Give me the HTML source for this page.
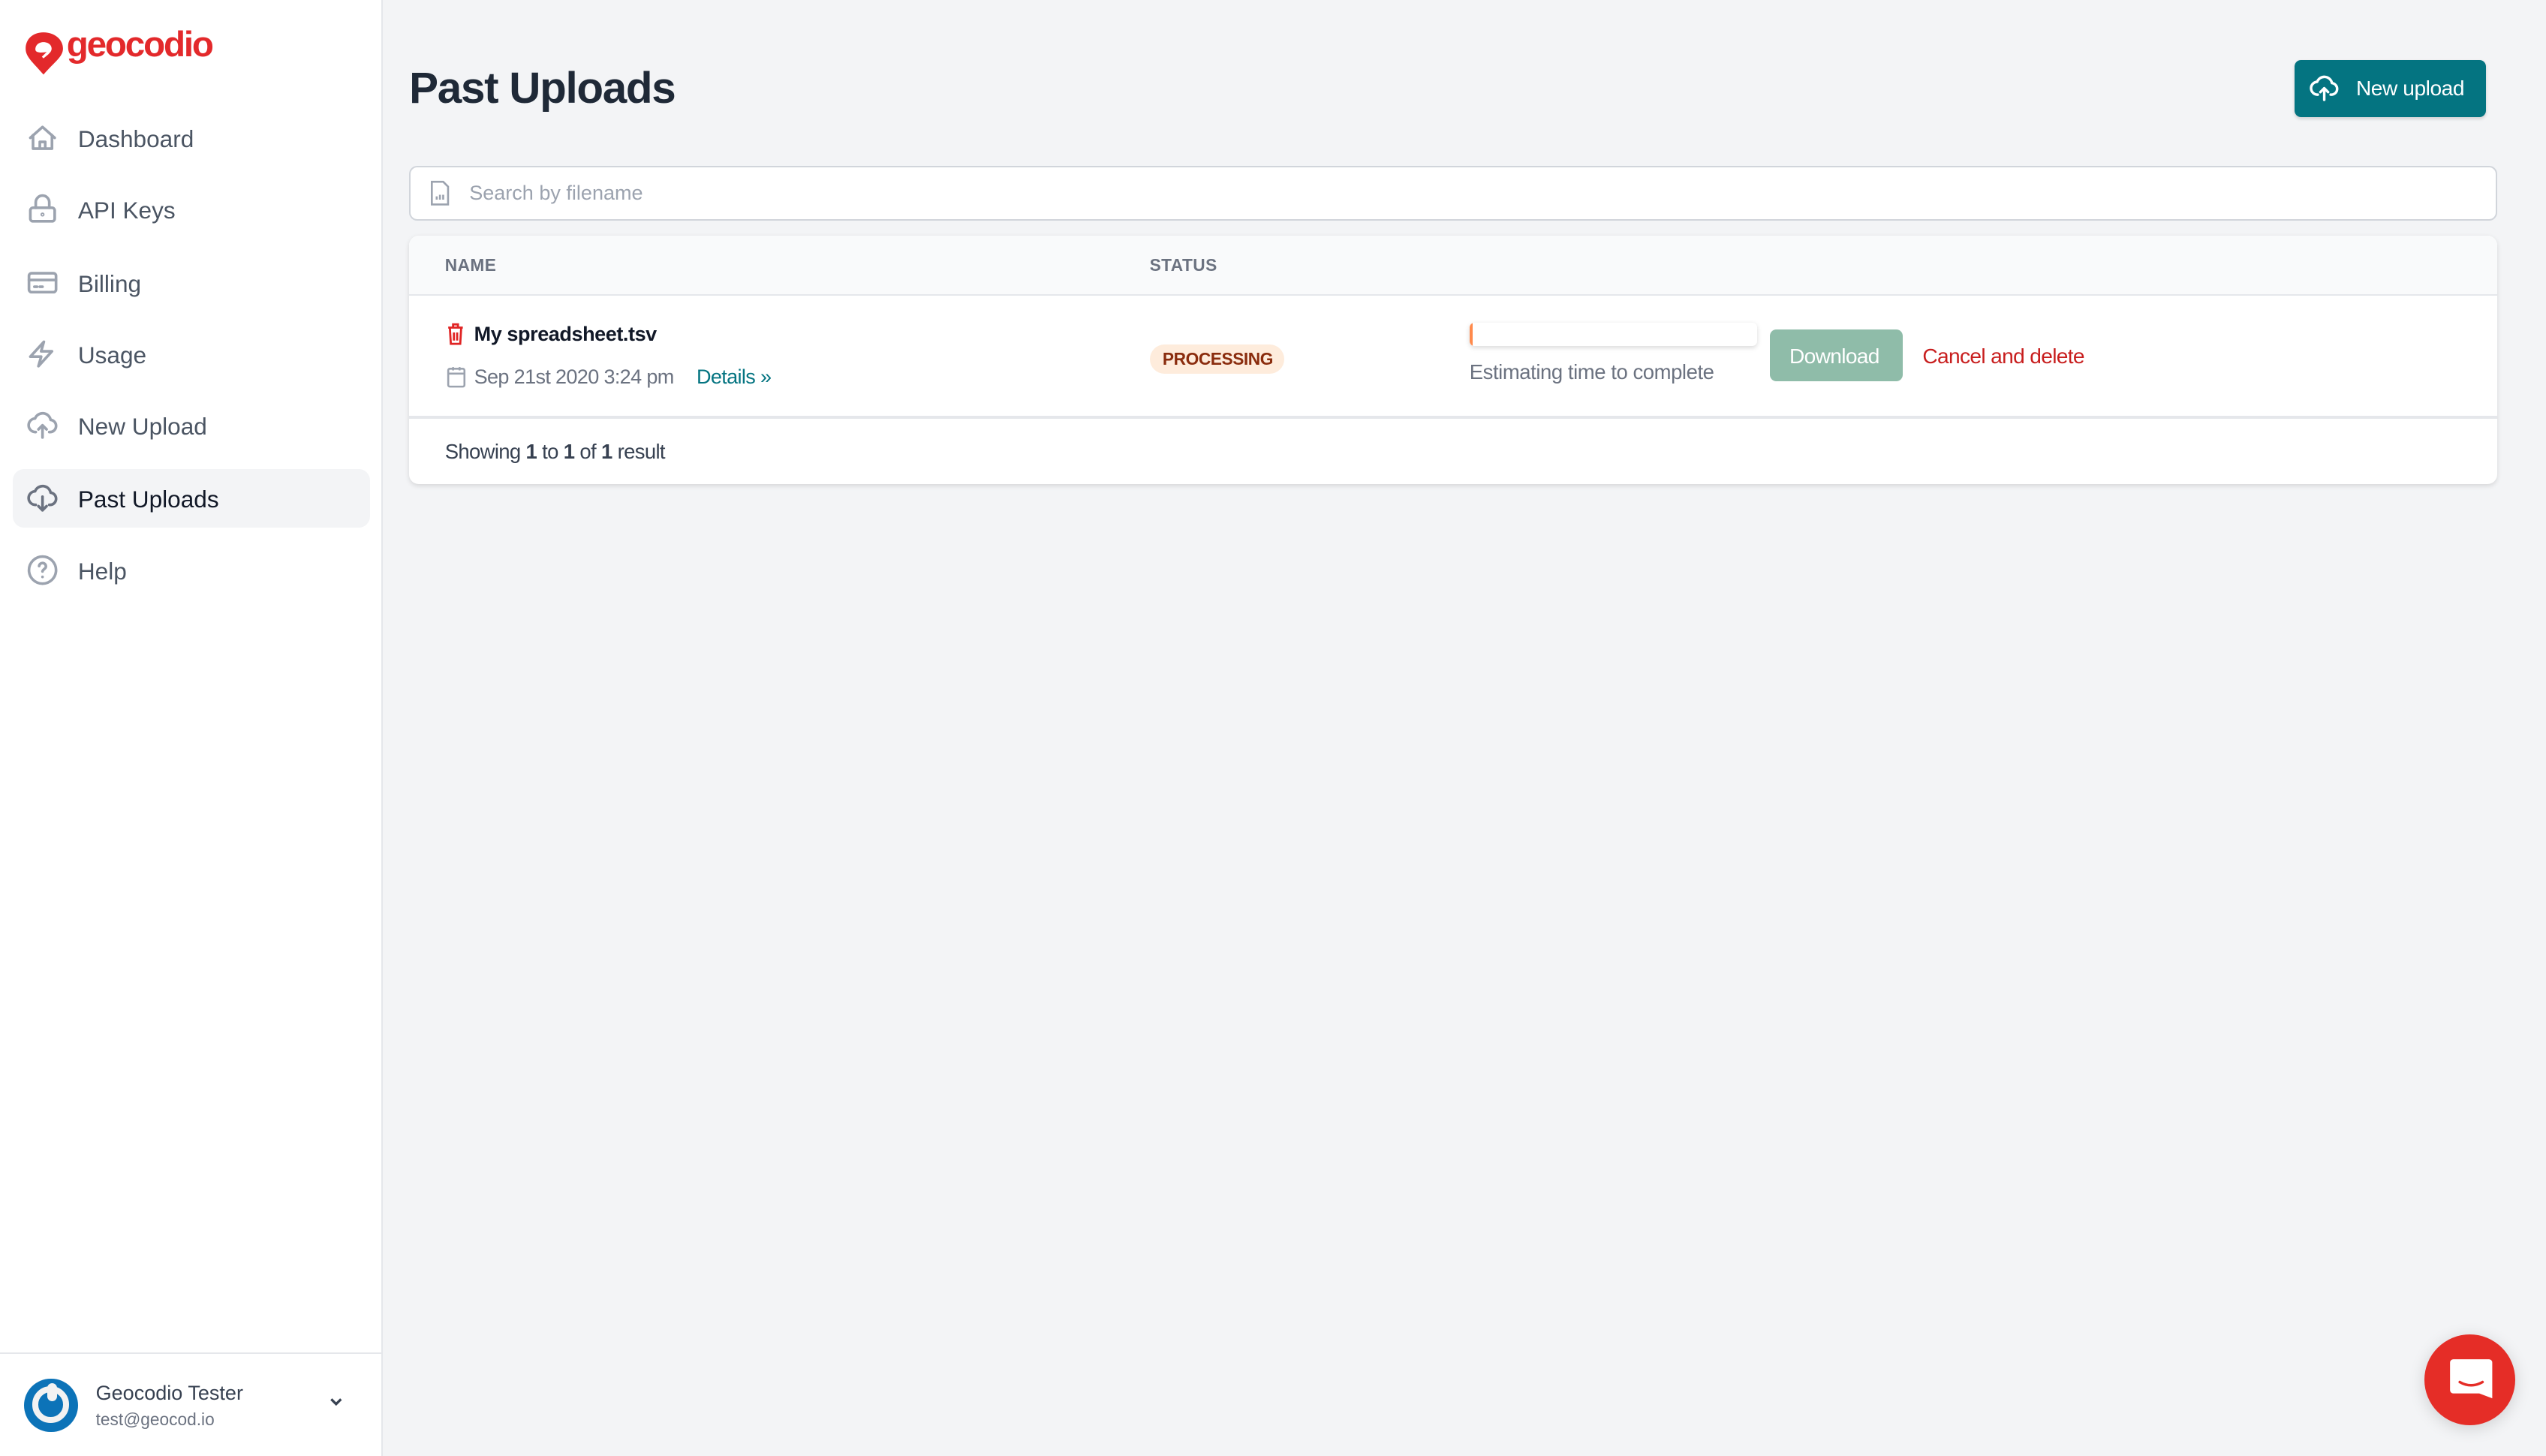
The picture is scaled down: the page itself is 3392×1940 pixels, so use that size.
<!DOCTYPE html>
<html><head><meta charset="utf-8">
<style>
html,body{margin:0;padding:0}
body{width:3392px;height:1940px;overflow:hidden;background:#f4f5f7;font-family:"Liberation Sans",sans-serif}
#r{position:absolute;left:0;top:0;width:1568px;height:897px;zoom:2.1633;background:#f3f4f6}
.a{position:absolute}
.side{left:0;top:0;width:235px;height:897px;background:#fff;border-right:1px solid #e5e7eb}
.nav{left:16px;width:220px;height:24px;font-size:14.6px;color:#4b5563;line-height:24px}
.nav svg{position:absolute;left:0;top:2px}
.nav span{position:absolute;left:32px;top:1px}
.th{font-size:10.5px;font-weight:bold;color:#6b7280;letter-spacing:.2px}
</style></head><body><div id="r">
<div class="a side"></div>
<svg class="a" style="left:15px;top:19px" width="25" height="29" viewBox="0 0 25 29"><path d="M12 1C5 1 1 5.5 1 11c0 5 4 8 11 16 7-8 12-11 12-16C24 5.5 19 1 12 1z" fill="#e3292b"/><path d="M7 11.5C7 8.5 9.5 7 12 7s5 1.5 5 4c0 1.5-1 2.5-2 3.5L12 17l-1-1 3-3c-2 .5-7 1-7-1.5z" fill="#fff"/></svg>
<div class="a" style="left:41px;top:15px;font-size:22px;font-weight:bold;color:#e3292b;letter-spacing:-1px">geocodio</div>

<div class="a nav" style="top:73px"><svg width="20" height="20" viewBox="0 0 24 24" fill="none" stroke="#9ca3af" stroke-width="2" stroke-linecap="round" stroke-linejoin="round"><path d="M3 12l9-8 9 8M5 10v10h14V10M10 20v-5h4v5"/></svg><span>Dashboard</span></div>
<div class="a nav" style="top:117px"><svg width="20" height="20" viewBox="0 0 24 24" fill="none" stroke="#9ca3af" stroke-width="2" stroke-linecap="round" stroke-linejoin="round"><rect x="3" y="11" width="18" height="10" rx="2"/><path d="M7 11V7a5 5 0 0110 0v4"/><circle cx="12" cy="16" r=".5"/></svg><span>API Keys</span></div>
<div class="a nav" style="top:162px"><svg width="20" height="20" viewBox="0 0 24 24" fill="none" stroke="#9ca3af" stroke-width="2" stroke-linecap="round"><rect x="2" y="5" width="20" height="14" rx="2"/><path d="M2 10h20M6 15h2M10 15h2"/></svg><span>Billing</span></div>
<div class="a nav" style="top:206px"><svg width="20" height="20" viewBox="0 0 24 24" fill="none" stroke="#9ca3af" stroke-width="2" stroke-linejoin="round"><path d="M13 3L3 14h8l-2 7 10-11h-8z"/></svg><span>Usage</span></div>
<div class="a nav" style="top:250px"><svg width="20" height="20" viewBox="0 0 24 24" fill="none" stroke="#9ca3af" stroke-width="2" stroke-linecap="round" stroke-linejoin="round"><path d="M7 17a5 5 0 01-.5-10A6 6 0 0118 8a4.5 4.5 0 01-1 9M12 12v9M9 15l3-3 3 3"/></svg><span>New Upload</span></div>
<div class="a" style="left:8px;top:289px;width:220px;height:36px;background:#f3f4f6;border-radius:7px"></div>
<div class="a nav" style="top:295px;color:#111827"><svg width="20" height="20" viewBox="0 0 24 24" fill="none" stroke="#6b7280" stroke-width="2" stroke-linecap="round" stroke-linejoin="round"><path d="M7 17a5 5 0 01-.5-10A6 6 0 0118 8a4.5 4.5 0 01-1 9M12 11v10M9 18l3 3 3-3"/></svg><span>Past Uploads</span></div>
<div class="a nav" style="top:339px"><svg width="20" height="20" viewBox="0 0 24 24" fill="none" stroke="#9ca3af" stroke-width="2" stroke-linecap="round"><circle cx="12" cy="12" r="10"/><path d="M9.5 9a2.5 2.5 0 015 .5c0 1.5-2.5 2-2.5 3.5M12 17h.01"/></svg><span>Help</span></div>

<div class="a" style="left:0;top:833px;width:235px;height:1px;background:#e5e7eb"></div>
<div class="a" style="left:15px;top:849px;width:33px;height:33px;border-radius:50%;background:#0c73b8"></div>
<div class="a" style="left:20px;top:854px;width:15px;height:15px;border-radius:50%;border:4px solid #f2f2f2"></div>
<div class="a" style="left:29px;top:852px;width:6px;height:11px;border-radius:3px;background:#f2f2f2"></div>
<div class="a" style="left:59px;top:851px;font-size:12.5px;color:#374151">Geocodio Tester</div>
<div class="a" style="left:59px;top:868px;font-size:10.5px;color:#6b7280">test@geocod.io</div>
<svg class="a" style="left:202px;top:860px" width="10" height="8" viewBox="0 0 10 8"><path d="M2 2l3 3 3-3" fill="none" stroke="#374151" stroke-width="1.5"/></svg>

<div class="a" style="left:252px;top:39px;font-size:27px;font-weight:bold;color:#1f2937;letter-spacing:-.6px">Past Uploads</div>
<div class="a" style="left:1413px;top:37px;width:118px;height:35px;background:#047481;border-radius:4px;box-shadow:0 1px 2px rgba(0,0,0,.15)"></div>
<svg class="a" style="left:1422px;top:45px" width="19" height="19" viewBox="0 0 24 24" fill="none" stroke="#fff" stroke-width="2" stroke-linecap="round" stroke-linejoin="round"><path d="M7 17a5 5 0 01-.5-10A6 6 0 0118 8a4.5 4.5 0 01-1 9M12 12v9M9 15l3-3 3 3"/></svg>
<div class="a" style="left:1451px;top:47px;font-size:13px;color:#fff;letter-spacing:-.2px">New upload</div>

<div class="a" style="left:252px;top:102px;width:1284px;height:32px;background:#fff;border:1px solid #d1d5db;border-radius:5px"></div>
<svg class="a" style="left:264px;top:111px" width="14" height="16" viewBox="0 0 14 16" fill="none" stroke="#9ca3af" stroke-width="1.2"><path d="M2 1h7l3 3v11H2z"/><path d="M5 12v-2M7 12V9M9 12v-3"/></svg>
<div class="a" style="left:289px;top:112px;font-size:12.5px;color:#9ca3af">Search by filename</div>

<div class="a" style="left:252px;top:145px;width:1286px;height:153px;background:#fff;border-radius:6px;box-shadow:0 1px 3px rgba(0,0,0,.12)"></div>
<div class="a" style="left:252px;top:145px;width:1286px;height:36px;background:#f9fafb;border-radius:6px 6px 0 0;border-bottom:1px solid #e5e7eb"></div>
<div class="a th" style="left:274px;top:157px">NAME</div>
<div class="a th" style="left:708px;top:157px">STATUS</div>
<svg class="a" style="left:275px;top:199px" width="11" height="14" viewBox="0 0 11 14" fill="none" stroke="#e02424" stroke-width="1.3"><path d="M1 3h9M4 3V1h3v2M2 3l.6 10h5.8L9 3M4.5 6v5M6.5 6v5"/></svg>
<div class="a" style="left:292px;top:199px;font-size:12.5px;font-weight:bold;color:#111827;letter-spacing:-.2px">My spreadsheet.tsv</div>
<svg class="a" style="left:275px;top:225px" width="12" height="14" viewBox="0 0 12 14" fill="none" stroke="#9ca3af" stroke-width="1.2"><rect x="1" y="2" width="10" height="11" rx="1"/><path d="M1 5h10M4 1v2M8 1v2"/></svg>
<div class="a" style="left:292px;top:225px;font-size:12.5px;color:#6b7280;letter-spacing:-.3px">Sep 21st 2020 3:24 pm</div>
<div class="a" style="left:429px;top:225px;font-size:12.5px;color:#047481;letter-spacing:-.3px">Details »</div>
<div class="a" style="left:708px;top:212px;width:83px;height:18px;background:#feecdc;border-radius:9px"></div>
<div class="a" style="left:716px;top:215px;font-size:10.5px;font-weight:bold;color:#8a2c0d;letter-spacing:-.2px">PROCESSING</div>
<div class="a" style="left:905px;top:199px;width:177px;height:14px;background:#fff;border-radius:3px;box-shadow:0 1px 3px rgba(0,0,0,.15);overflow:hidden"><div style="width:2px;height:14px;background:#ff8a4c"></div></div>
<div class="a" style="left:905px;top:222px;font-size:12.7px;color:#6b7280;letter-spacing:-.2px">Estimating time to complete</div>
<div class="a" style="left:1090px;top:203px;width:82px;height:32px;background:#8fbca9;border-radius:4px"></div>
<div class="a" style="left:1102px;top:212px;font-size:13px;color:#fff;letter-spacing:-.3px">Download</div>
<div class="a" style="left:1184px;top:212px;font-size:13px;color:#c81e1e;letter-spacing:-.3px">Cancel and delete</div>
<div class="a" style="left:252px;top:256px;width:1286px;height:2px;background:#e5e7eb"></div>
<div class="a" style="left:274px;top:271px;font-size:12.7px;color:#374151;letter-spacing:-.3px">Showing <b>1</b> to <b>1</b> of <b>1</b> result</div>

<div class="a" style="left:1493px;top:822px;width:56px;height:56px;border-radius:50%;background:#e52d27;box-shadow:0 2px 10px rgba(0,0,0,.15)"></div>
<svg class="a" style="left:1508px;top:836px" width="28" height="30" viewBox="0 0 28 30"><path d="M3 1h22a2 2 0 012 2v22l-8-3H3a2 2 0 01-2-2V3a2 2 0 012-2z" fill="#fff"/><path d="M7 15q7 4 14 0" fill="none" stroke="#e52d27" stroke-width="1.6" stroke-linecap="round"/></svg>
</div></body></html>
